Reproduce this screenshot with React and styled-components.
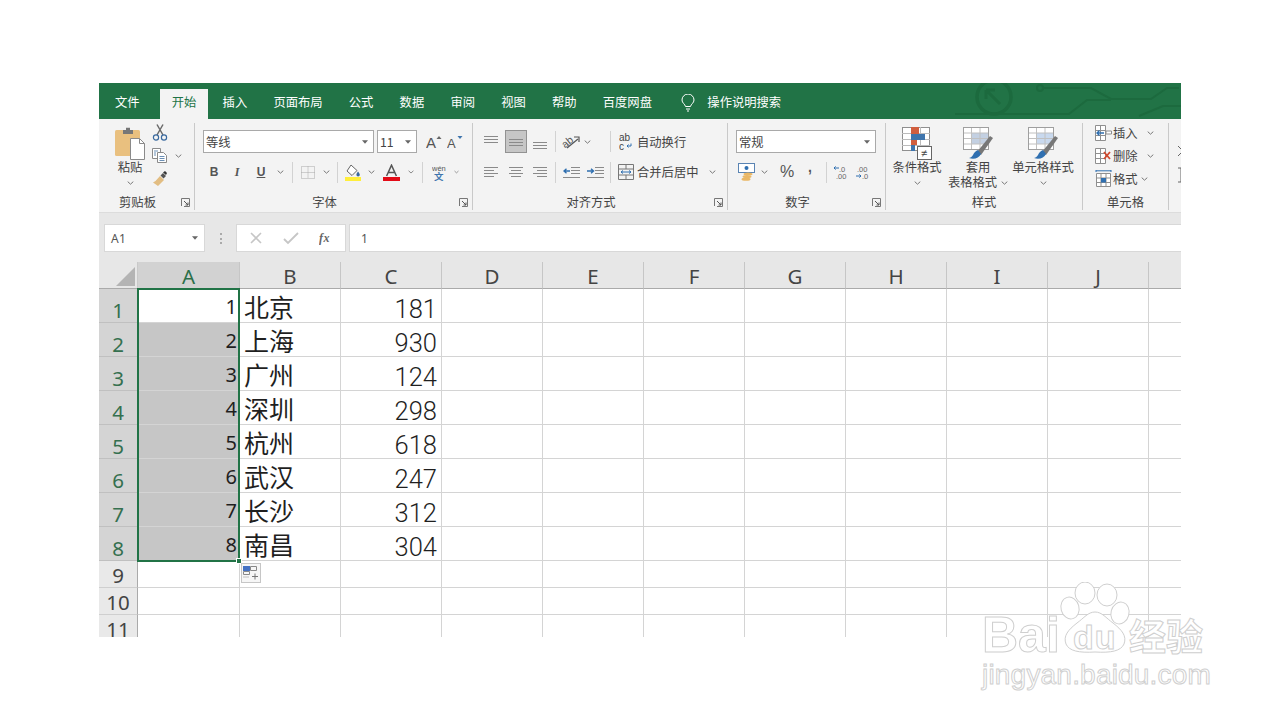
import React from 'react'
import styled, { createGlobalStyle } from 'styled-components'

const GlobalStyle = createGlobalStyle`
  html, body { margin: 0; background: #fff; }
  * { box-sizing: border-box; }
`

const Page = styled.div`
  position: relative;
  width: 1280px;
  height: 720px;
  padding: 83px 99px 0;
  overflow: hidden;
  font-family: "Noto Sans CJK SC", "Noto Sans", sans-serif;
  color: #444;
`
const ExcelWindow = styled.div`
  position: relative;
  width: 1082px;
  height: 554px;
  overflow: hidden;
  background: #e7e7e7;
`
const TabBar = styled.div`
  position: relative;
  display: flex;
  align-items: flex-end;
  height: 36px;
  padding-left: 4px;
  gap: 2.2px;
  background: #217346;
`
const Circuit = styled.svg`
  position: absolute;
  left: 0;
  top: 0;
`
const Tab = styled.div`
  position: relative;
  height: 30px;
  padding: 0 12px;
  line-height: 26px;
  font-size: 12.3px;
  white-space: nowrap;
  color: ${p => (p.$active ? '#217346' : '#fff')};
  background: ${p => (p.$active ? '#f3f3f3' : 'transparent')};
  margin-right: ${p => p.$mr || 0}px;
  margin-left: ${p => p.$ml || 0}px;
`
const TabIcon = styled.svg`
  position: relative;
  margin: 0 0 7px 15px;
`
const Ribbon = styled.div`
  display: flex;
  height: 94px;
  padding-top: 4px;
  background: #f3f3f3;
  border-bottom: 1px solid #dcdcdc;
  overflow: hidden;
`
const Group = styled.section`
  flex: none;
  display: flex;
  flex-direction: column;
  width: ${p => p.$w}px;
  height: 87px;
  border-right: 1px solid #c9c9c9;
`
const GroupBody = styled.div`
  flex: none;
  height: 72px;
  display: ${p => (p.$row ? 'flex' : 'block')};
  padding: ${p => p.$pt ?? 7}px 0 0 ${p => p.$pl || 0}px;
`
const GroupFoot = styled.div`
  display: flex;
  height: 15px;
  align-items: center;
  font-size: 12.3px;
  line-height: 15px;
`
const GroupName = styled.div`
  flex: 1;
  text-align: center;
`
const Launcher = styled.div`
  flex: none;
  width: 18px;
  display: flex;
  justify-content: center;
`
const ToolRow = styled.div`
  display: flex;
  align-items: center;
  height: ${p => p.$h || 23}px;
  margin-bottom: ${p => p.$mb || 0}px;
  margin-left: ${p => p.$ml || 0}px;
  font-size: 12.3px;
  white-space: nowrap;
`
const Slot = styled.div`
  flex: none;
  display: flex;
  align-items: center;
  justify-content: center;
  width: ${p => p.$w}px;
  height: 100%;
`
const ActiveSlot = styled(Slot)`
  width: 22px;
  margin: 0 2px;
  background: #c6c6c6;
  border: 1px solid #929292;
`
const Sep = styled.div`
  flex: none;
  width: 1px;
  height: 21px;
  background: #d2d2d2;
  margin: 0 ${p => p.$r || 0}px 0 ${p => p.$l || 0}px;
`
const Combo = styled.div`
  flex: none;
  display: flex;
  align-items: center;
  justify-content: space-between;
  width: ${p => p.$w}px;
  height: 23px;
  padding: 0 5px 0 2px;
  background: #fff;
  border: 1px solid #a9a9a9;
  margin-right: ${p => p.$mr || 0}px;
  font-size: 12.3px;
`
const Letter = styled.span`
  font-family: ${p => (p.$serif ? '"Liberation Serif"' : '"Liberation Sans"')}, serif;
  font-weight: ${p => (p.$thin ? 400 : 700)};
  font-style: ${p => (p.$italic ? 'italic' : 'normal')};
  font-size: ${p => p.$size || 12}px;
  text-decoration: ${p => (p.$under ? 'underline' : 'none')};
  margin-bottom: ${p => p.$raise || 0}px;
  color: #555;
`
const BigButton = styled.div`
  flex: none;
  display: flex;
  flex-direction: column;
  align-items: center;
  width: ${p => p.$w}px;
  margin-left: ${p => p.$ml || 0}px;
  font-size: 12.3px;
  line-height: 15px;
  white-space: nowrap;
`
const BigIcon = styled.div`
  height: 33px;
  display: flex;
  align-items: flex-start;
`
const BigLine = styled.div`
  height: 15px;
  display: flex;
  align-items: center;
  gap: 4px;
`
const SmallColumn = styled.div`
  margin-top: ${p => p.$mt}px;
`
const WrapLabel = styled.span`
  margin-left: 1px;
`
const FormulaBar = styled.div`
  display: flex;
  height: 49px;
  padding-top: 11px;
  background: #e7e7e7;
`
const FieldBox = styled.div`
  flex: ${p => (p.$w ? 'none' : 1)};
  display: flex;
  align-items: center;
  justify-content: space-between;
  width: ${p => (p.$w ? `${p.$w}px` : 'auto')};
  height: 28px;
  margin-left: ${p => p.$ml || 0}px;
  padding: 0 ${p => p.$px ?? 6}px;
  background: #fff;
  border: 1px solid #d8d8d8;
  border-right-width: ${p => (p.$w ? 1 : 0)}px;
  font-family: "Noto Sans", sans-serif;
  font-size: 12px;
  letter-spacing: 0.4px;
  color: #555;
`
const Dots = styled.div`
  flex: none;
  width: 2px;
  height: 11px;
  margin: 9px 0 0 15px;
  border-left: 2px dotted #aaa;
`
const Sheet = styled.div`
  position: relative;
  background: #fff;
`
const Row = styled.div`
  display: flex;
  height: ${p => p.$h}px;
`
const RowHead = styled.div`
  flex: none;
  width: 39px;
  display: flex;
  align-items: flex-end;
  justify-content: center;
  font-family: "Noto Sans", sans-serif;
  font-size: 20.5px;
  line-height: 23px;
  background: ${p => (p.$on ? '#d4d4d4' : '#e9e9e9')};
  color: ${p => (p.$on ? '#35704f' : '#444')};
  border-right: 1px solid #aaa;
  border-bottom: 1px solid ${p => (p.$on ? '#c0c0c0' : '#cfcfcf')};
`
const Corner = styled.div`
  flex: none;
  width: 39px;
  display: flex;
  padding: 5px 0 0 17px;
  background: #e7e7e7;
  border-bottom: 1px solid #aaa;
  border-right: 1px solid #c9c9c9;
`
const ColHead = styled.div`
  flex: none;
  width: ${p => p.$w}px;
  text-align: center;
  font-family: "Noto Sans", sans-serif;
  font-size: 20.5px;
  line-height: 29px;
  background: ${p => (p.$on ? '#d2d2d2' : '#e7e7e7')};
  color: ${p => (p.$on ? '#2c6f49' : '#444')};
  border-right: 1px solid #c6c6c6;
  border-bottom: 1px solid #aaa;
`
const Cell = styled.div`
  flex: none;
  display: flex;
  align-items: flex-end;
  justify-content: ${p => (p.$left ? 'flex-start' : 'flex-end')};
  width: ${p => p.$w}px;
  padding: 0 ${p => (p.$small ? 2 : 4)}px 0 4px;
  font-family: ${p => (p.$small ? '"Noto Sans"' : 'Roboto')}, sans-serif;
  font-size: ${p => (p.$small ? 20 : 25.5)}px;
  font-weight: ${p => (p.$small ? 400 : 300)};
  line-height: ${p => (p.$small ? 30 : 26)}px;
  color: #1f1f1f;
  background: ${p => (p.$shade ? '#c6c6c6' : '#fff')};
  border-right: 1px solid #d4d4d4;
  border-bottom: 1px solid #d4d4d4;
`
const CjkText = styled.span`
  font-family: "Noto Sans CJK SC", sans-serif;
  font-size: 25px;
  font-weight: 400;
  line-height: 32px;
`
const Selection = styled.div`
  position: absolute;
  left: 38px;
  top: 26px;
  width: 103px;
  height: 274px;
  border: 2px solid #217346;
  pointer-events: none;
`
const FillHandle = styled.div`
  position: absolute;
  right: -4px;
  bottom: -4px;
  width: 6px;
  height: 6px;
  background: #217346;
  border: 1px solid #fff;
`
const PasteOptions = styled.div`
  position: absolute;
  left: 142px;
  top: 301px;
  width: 20px;
  height: 20px;
  display: flex;
  align-items: center;
  justify-content: center;
  background: #f6f6f6;
  border: 1px solid #c6c6c6;
`
const Watermark = styled.div`
  position: absolute;
  left: 982px;
  top: 582px;
  width: 232px;
  height: 112px;
  color: #fff;
  -webkit-text-stroke: 1px #cfcfcf;
  font-family: "Liberation Sans", sans-serif;
`
const Paw = styled.svg`
  position: absolute;
  left: 72px;
  top: 0;
`
const MarkLine = styled.div`
  position: absolute;
  left: 0;
  top: ${p => p.$top}px;
  display: flex;
  align-items: baseline;
  font-size: ${p => p.$size}px;
  line-height: ${p => p.$lh}px;
  font-weight: ${p => p.$weight || 400};
  letter-spacing: ${p => p.$ls || 0}px;
  white-space: nowrap;
`
const MarkDu = styled.span`
  position: absolute;
  left: 91px;
  top: 38px;
  font-size: 34px;
  line-height: 34px;
  letter-spacing: 1px;
  font-weight: 700;
`
const MarkCn = styled.span`
  position: absolute;
  left: 147px;
  top: 33px;
  font-family: "Noto Sans CJK SC", sans-serif;
  font-size: 37px;
  line-height: 40px;
  font-weight: 700;
`

const Chev = () => (
  <svg width="7" height="4" viewBox="0 0 7 4"><path d="M.7.6 3.5 3.2 6.3.6" fill="none" stroke="#777" strokeWidth="1" /></svg>
)
const Caret = () => (
  <svg width="6" height="4" viewBox="0 0 7 4"><path d="M0 0h7L3.5 4z" fill="#666" /></svg>
)
const LaunchIcon = () => (
  <svg width="9" height="9" viewBox="0 0 9 9" fill="none" stroke="#777"><path d="M.5 8V.5H8.5V8.5H3" /><path d="M3 3 7 7M7 4.5V7H4.5" stroke="#555" /></svg>
)

const PasteIcon = () => (
  <svg width="30" height="33" viewBox="0 0 30 33">
    <rect x="0" y="3" width="25" height="26" rx="1.5" fill="#e9c07f" />
    <path d="M8 3h3V.8h4V3h3v4H8z" fill="#777" />
    <path d="M15.500 11.500h9l5 5v16h-14z" fill="#fff" stroke="#8a8a8a" />
    <path d="M24.500 11.500v5h5" fill="none" stroke="#8a8a8a" />
  </svg>
)
const CutIcon = () => (
  <svg width="16" height="17" viewBox="0 0 16 17" fill="none">
    <path d="M5 .5 11 11M11 .5 5 11" stroke="#6a6a6a" strokeWidth="1.5" />
    <circle cx="4" cy="13.500" r="2.600" stroke="#39699f" strokeWidth="1.200" />
    <circle cx="12" cy="13.500" r="2.600" stroke="#39699f" strokeWidth="1.200" />
  </svg>
)
const CopyIcon = () => (
  <svg width="16" height="15" viewBox="0 0 16 15" fill="#fff" stroke="#8a8a8a">
    <path d="M.5.5h8v10h-8z" />
    <path d="M5.500 4.500h6l3 3v7h-9z" />
    <path d="M2 3h4M2 5h2M2 7h2M7.500 8.500h5M7.500 10.500h5M7.500 12.500h5" stroke="#6b8fb5" fill="none" />
  </svg>
)
const BrushIcon = () => (
  <svg width="16" height="16" viewBox="0 0 16 16">
    <path d="M8 5 12 9 6 15 1 11.500 3.500 10z" fill="#e2bd82" />
    <path d="M8.500 4.500 11 2l3 3-2.500 2.500z" fill="#555" />
    <path d="M11 1.500 13 0l2 2-1 2z" fill="#333" />
  </svg>
)
const BordersIcon = () => (
  <svg width="14" height="13" viewBox="0 0 14 13" fill="none" stroke="#a8a8a8" strokeDasharray="1 1">
    <path d="M.5.5h13v12H.5zM7 .5v12M.5 6.500h13" />
  </svg>
)
const FillIcon = () => (
  <svg width="17" height="17" viewBox="0 0 17 17">
    <path d="M6 1 12 6.500 7 11.500 2 7z" fill="#fff" stroke="#666" />
    <path d="M13 7.500c1.200 1.600 1.800 2.400 1.800 3.200a1.700 1.700 0 0 1-3.400 0c0-.8.6-1.600 1.600-3.200z" fill="#39699f" />
    <rect x="0" y="13" width="16" height="4" fill="#ffee3b" />
  </svg>
)
const FontColorIcon = () => (
  <svg width="17" height="17" viewBox="0 0 17 17">
    <path d="M3.600 12 8.500 1.200 13.400 12M5.400 8.500h6.200" fill="none" stroke="#555" strokeWidth="1.500" />
    <rect x="0" y="13" width="17" height="4" fill="#e30b17" />
  </svg>
)
const PhoneticIcon = () => (
  <svg width="14" height="17" viewBox="0 0 14 17">
    <text x="0" y="6.500" fontSize="7.500" fill="#555" fontFamily="Liberation Sans">wén</text>
    <text x="2" y="16" fontSize="9.500" fontWeight="700" fill="#3f75ad" fontFamily="Noto Sans CJK SC">文</text>
  </svg>
)
const GrowFont = ({ down }) => (
  <svg width="17" height="17" viewBox="0 0 17 17">
    <text x="0" y="15" fontSize={down ? 13 : 15} fill="#555" fontFamily="Liberation Sans">A</text>
    <path d={down ? 'M10.500 3h5L13 6z' : 'M10.500 6h5L13 3z'} fill={down ? '#3f75ad' : '#666'} />
  </svg>
)
const AlignIcon = ({ lines, y = 0 }) => (
  <svg width="16" height="14" viewBox="0 0 16 14" fill="none" stroke="#8a8a8a">
    {lines.map((l, i) => (
      <path key={i} d={`M${l[0]} ${y + i * 3 + 1.5}H${l[1]}`} />
    ))}
  </svg>
)
const OrientIcon = () => (
  <svg width="20" height="17" viewBox="0 0 20 17" fill="none">
    <text x="1" y="13" fontSize="10.500" fill="#555" fontFamily="Liberation Sans" transform="rotate(-38 6 10)">ab</text>
    <path d="M6 15 17 6" stroke="#555" strokeWidth="1.200" />
    <path d="M13 4h5v5" stroke="#555" strokeWidth="1.200" />
  </svg>
)
const IndentIcon = ({ right }) => (
  <svg width="17" height="13" viewBox="0 0 17 13" fill="none" stroke="#8a8a8a">
    <path d="M8 1.500h9M8 4.500h9M8 7.500h9M0 11.500h17" />
    {right
      ? <path d="M0 5h6M4 2.800 6.500 5 4 7.200" stroke="#2f6fb0" strokeWidth="1.400" />
      : <path d="M7 5H1M3.500 2.800 1 5l2.500 2.200" stroke="#2f6fb0" strokeWidth="1.400" />}
  </svg>
)
const WrapIcon = () => (
  <svg width="15" height="17" viewBox="0 0 15 17" fill="none">
    <text x="0" y="8" fontSize="10" fill="#444" fontFamily="Liberation Sans">ab</text>
    <text x="0" y="16.500" fontSize="10" fill="#444" fontFamily="Liberation Sans">c</text>
    <path d="M12 10.500v2.500H8M9.500 11.500 8 13l1.500 1.500" stroke="#2f6fb0" />
  </svg>
)
const MergeIcon = () => (
  <svg width="16" height="16" viewBox="0 0 16 16" fill="none" stroke="#777">
    <path d="M.5.5h15v15H.5zM.5 5h15M.5 11h15M8 .5V5M8 11v4.500" />
    <path d="M3 8h10M5 6.500 3 8l2 1.500M11 6.500 13 8l-2 1.500" stroke="#2f6fb0" />
  </svg>
)
const CurrencyIcon = () => (
  <svg width="18" height="18" viewBox="0 0 18 18">
    <rect x=".5" y=".5" width="16" height="9" fill="#fff" stroke="#5a84b3" />
    <circle cx="8.500" cy="5" r="2" fill="#2f6fb0" />
    <ellipse cx="10" cy="11" rx="4.500" ry="1.600" fill="#eab867" />
    <ellipse cx="9" cy="13.600" rx="4.500" ry="1.600" fill="#eab867" />
    <ellipse cx="8" cy="16.200" rx="4.500" ry="1.600" fill="#eab867" />
  </svg>
)
const DecimalIcon = ({ more }) => (
  <svg width="16" height="15" viewBox="0 0 16 15">
    <text x={more ? 6 : 1} y="6.500" fontSize="7.500" fill="#666" fontFamily="Liberation Sans">{more ? '.0' : '.00'}</text>
    <text x={more ? 3 : 6} y="14" fontSize="7.500" fill="#666" fontFamily="Liberation Sans">{more ? '.00' : '.0'}</text>
    {more
      ? <path d="M6 3H1M2.600 1.400 1 3l1.600 1.600" fill="none" stroke="#2f6fb0" />
      : <path d="M0 11h5M3.400 9.400 5 11l-1.600 1.600" fill="none" stroke="#2f6fb0" />}
  </svg>
)
const CondFormatIcon = () => (
  <svg width="30" height="33" viewBox="0 0 30 33">
    <rect x=".5" y=".5" width="27" height="23" fill="#fff" stroke="#8f8f8f" />
    <path d="M9.500 0v24M18.500 0v24M0 6.500h28M0 12.500h28M0 18.500h28" stroke="#bbb" />
    <rect x="9" y="0" width="8" height="7" fill="#d15f3f" />
    <rect x="9" y="7" width="14" height="6" fill="#3f75ad" />
    <rect x="9" y="13" width="6" height="5" fill="#d15f3f" />
    <rect x="9" y="18" width="4" height="6" fill="#3f75ad" />
    <rect x="15.500" y="19.500" width="14" height="13" fill="#fff" stroke="#666" />
    <text x="19" y="30" fontSize="11" fill="#444" fontFamily="Liberation Sans">≠</text>
  </svg>
)
const TableBrush = ({ cells }) => (
  <svg width="30" height="33" viewBox="0 0 30 33">
    <rect x=".5" y=".5" width="25" height="22" fill="#fff" stroke="#9f9f9f" />
    {cells}
    <path d="M8.500 1v21M17 1v21M1 6h24M1 11.500h24M1 17h24" stroke="#c0c0c0" />
    <path d="M14 25 27 9l3 2-12 17z" fill="#777" />
    <path d="M15 23c-3 1-4 3-5 5-1 2-3 3-4 3 5 2 10 0 12-4z" fill="#2f6fb0" />
  </svg>
)
const InsertCellIcon = () => (
  <svg width="17" height="16" viewBox="0 0 17 16" fill="#fff" stroke="#8f8f8f">
    <path d="M.5.5h10v15H.5zM.5 5.500h10M.5 10.500h10M5.500.5v15" />
    <path d="M11 6h5.500v3H11z" />
    <path d="M9 8H2M4.500 5.500 2 8l2.500 2.500" stroke="#2f6fb0" strokeWidth="1.400" fill="none" />
  </svg>
)
const DeleteCellIcon = () => (
  <svg width="17" height="16" viewBox="0 0 17 16" fill="#fff" stroke="#8f8f8f">
    <path d="M.5.5h10v15H.5zM.5 5.500h10M.5 10.500h10M5.500.5v15" />
    <path d="M9 4l6 7M15 4l-6 7" stroke="#d1492e" strokeWidth="1.800" />
  </svg>
)
const FormatCellIcon = () => (
  <svg width="17" height="17" viewBox="0 0 17 17" fill="#fff" stroke="#8f8f8f">
    <path d="M1.500 3.500h14v13h-14zM1.500 8h14M1.500 12.500h14M6 3.500v13M11 3.500v13" />
    <path d="M1 .8h15M1 0v2M16 0v2" stroke="#2f6fb0" />
    <rect x="6" y="8" width="5" height="4.500" fill="#2f6fb0" stroke="none" />
  </svg>
)

const smallLines = [[1, 15], [1, 15], [1, 15]]
const leftLines = [[1, 15], [1, 11], [1, 15], [1, 11]]
const midLines = [[1, 15], [3, 13], [1, 15], [3, 13]]
const rightLines = [[1, 15], [5, 15], [1, 15], [5, 15]]

const columns = [
  ['A', 102], ['B', 101], ['C', 101], ['D', 101], ['E', 101], ['F', 101],
  ['G', 101], ['H', 101], ['I', 101], ['J', 101], ['', 101],
]
const cities = ['北京', '上海', '广州', '深圳', '杭州', '武汉', '长沙', '南昌']
const values = [181, 930, 124, 298, 618, 247, 312, 304]
const tabs = ['插入', '页面布局', '公式', '数据', '审阅', '视图', '帮助', '百度网盘']
const emptyCols = columns.slice(3)

function DataRow({ n }) {
  return (
    <Row $h={34}>
      <RowHead $on>{n}</RowHead>
      <Cell $w={102} $small $shade={n > 1}>{n}</Cell>
      <Cell $w={101} $left><CjkText>{cities[n - 1]}</CjkText></Cell>
      <Cell $w={101}>{values[n - 1]}</Cell>
      {emptyCols.map((c, i) => <Cell key={i} $w={c[1]} />)}
    </Row>
  )
}

function EmptyRow({ n, h }) {
  return (
    <Row $h={h}>
      <RowHead>{n}</RowHead>
      {columns.map((c, i) => <Cell key={i} $w={c[1]} />)}
    </Row>
  )
}

export default function App() {
  return (
    <Page>
      <GlobalStyle />
      <ExcelWindow>
        <TabBar>
          <Circuit width="1082" height="36" fill="none" stroke="#1c6a3e" strokeWidth="2">
            <circle cx="895" cy="14" r="17" strokeWidth="3.500" />
            <path d="M887 7l14 14M887 7v9M887 7h9" strokeWidth="3" />
            <circle cx="941" cy="5" r="3" />
            <path d="M944 5h48l20 11h40l16-11h12" />
            <path d="M856 31h114l18-14h24" />
            <path d="M1040 33l24-10h18" />
          </Circuit>
          <Tab $mr={6}>文件</Tab>
          <Tab $active>开始</Tab>
          {tabs.map(t => <Tab key={t}>{t}</Tab>)}
          <TabIcon width="14" height="18" viewBox="0 0 14 18" fill="none" stroke="#fff">
            <path d="M4.500 12.500C4 10 1 9 1 6a6 6 0 0 1 12 0c0 3-3 4-3.500 6.500z" />
            <path d="M5 15h4M6 17h2" />
          </TabIcon>
          <Tab $ml={-2}>操作说明搜索</Tab>
        </TabBar>

        <Ribbon>
          <Group $w={96}>
            <GroupBody $row $pt={4}>
              <BigButton $w={40} $ml={11}>
                <BigIcon><PasteIcon /></BigIcon>
                <BigLine>粘贴</BigLine>
                <BigLine><Chev /></BigLine>
              </BigButton>
              <SmallColumn $mt={-6}>
                <ToolRow><Slot $w={20}><CutIcon /></Slot></ToolRow>
                <ToolRow><Slot $w={20}><CopyIcon /></Slot><Slot $w={16}><Chev /></Slot></ToolRow>
                <ToolRow><Slot $w={20}><BrushIcon /></Slot></ToolRow>
              </SmallColumn>
            </GroupBody>
            <GroupFoot><GroupName>剪贴板</GroupName><Launcher><LaunchIcon /></Launcher></GroupFoot>
          </Group>

          <Group $w={278}>
            <GroupBody $pl={8}>
              <ToolRow $mb={7}>
                <Combo $w={171} $mr={3}>等线<Caret /></Combo>
                <Combo $w={40} $mr={7}>11<Caret /></Combo>
                <Slot $w={20}><GrowFont /></Slot>
                <Slot $w={22}><GrowFont down /></Slot>
              </ToolRow>
              <ToolRow $h={24}>
                <Slot $w={22}><Letter>B</Letter></Slot>
                <Slot $w={24}><Letter $serif $italic>I</Letter></Slot>
                <Slot $w={24}><Letter $under>U</Letter></Slot>
                <Slot $w={14}><Chev /></Slot>
                <Sep $l={5} />
                <Slot $w={29}><BordersIcon /></Slot>
                <Slot $w={8}><Chev /></Slot>
                <Sep $l={7} $r={1} />
                <Slot $w={29}><FillIcon /></Slot>
                <Slot $w={7}><Chev /></Slot>
                <Slot $w={33}><FontColorIcon /></Slot>
                <Slot $w={6}><Chev /></Slot>
                <Sep $l={8} />
                <Slot $w={31}><PhoneticIcon /></Slot>
                <Slot $w={5}><Chev /></Slot>
              </ToolRow>
            </GroupBody>
            <GroupFoot><GroupName>字体</GroupName><Launcher><LaunchIcon /></Launcher></GroupFoot>
          </Group>

          <Group $w={255}>
            <GroupBody $pl={6}>
              <ToolRow $mb={7}>
                <Slot $w={24}><AlignIcon lines={smallLines} y={0} /></Slot>
                <ActiveSlot $w={22}><AlignIcon lines={smallLines} y={3} /></ActiveSlot>
                <Slot $w={22}><AlignIcon lines={smallLines} y={6} /></Slot>
                <Sep $l={4} $r={4} />
                <Slot $w={22}><OrientIcon /></Slot>
                <Slot $w={10}><Chev /></Slot>
                <Sep $l={18} $r={5} />
                <Slot $w={20}><WrapIcon /></Slot>
                <WrapLabel>自动换行</WrapLabel>
              </ToolRow>
              <ToolRow $h={24}>
                <Slot $w={24}><AlignIcon lines={leftLines} y={1} /></Slot>
                <Slot $w={26}><AlignIcon lines={midLines} y={1} /></Slot>
                <Slot $w={22}><AlignIcon lines={rightLines} y={1} /></Slot>
                <Sep $l={4} $r={4} />
                <Slot $w={22}><IndentIcon /></Slot>
                <Slot $w={26}><IndentIcon right /></Slot>
                <Sep $l={2} $r={5} />
                <Slot $w={20}><MergeIcon /></Slot>
                <WrapLabel>合并后居中</WrapLabel>
                <Slot $w={28}><Chev /></Slot>
              </ToolRow>
            </GroupBody>
            <GroupFoot><GroupName>对齐方式</GroupName><Launcher><LaunchIcon /></Launcher></GroupFoot>
          </Group>

          <Group $w={158}>
            <GroupBody $pl={8}>
              <ToolRow $mb={7}><Combo $w={140}>常规<Caret /></Combo></ToolRow>
              <ToolRow $h={24}>
                <Slot $w={21}><CurrencyIcon /></Slot>
                <Slot $w={15}><Chev /></Slot>
                <Slot $w={30}><Letter $thin $size={16}>%</Letter></Slot>
                <Slot $w={16}><Letter $size={14} $raise={10}>,</Letter></Slot>
                <Sep $l={8} $r={3} />
                <Slot $w={22}><DecimalIcon more /></Slot>
                <Slot $w={24}><DecimalIcon /></Slot>
              </ToolRow>
            </GroupBody>
            <GroupFoot><GroupName>数字</GroupName><Launcher><LaunchIcon /></Launcher></GroupFoot>
          </Group>

          <Group $w={197}>
            <GroupBody $row $pt={4}>
              <BigButton $w={62}>
                <BigIcon><CondFormatIcon /></BigIcon>
                <BigLine>条件格式</BigLine>
                <BigLine><Chev /></BigLine>
              </BigButton>
              <BigButton $w={60}>
                <BigIcon>
                  <TableBrush cells={<rect x="9" y="6" width="16" height="11" fill="#c3d0e2" />} />
                </BigIcon>
                <BigLine>套用</BigLine>
                <BigLine>表格格式<Chev /></BigLine>
              </BigButton>
              <BigButton $w={70}>
                <BigIcon>
                  <TableBrush cells={<rect x="8" y="6" width="17" height="11" fill="#c9d9ee" />} />
                </BigIcon>
                <BigLine>单元格样式</BigLine>
                <BigLine><Chev /></BigLine>
              </BigButton>
            </GroupBody>
            <GroupFoot><GroupName>样式</GroupName></GroupFoot>
          </Group>

          <Group $w={86}>
            <GroupBody $pt={0}>
              <SmallColumn $mt={-2}>
                <ToolRow $ml={10}><Slot $w={20}><InsertCellIcon /></Slot>插入<Slot $w={26}><Chev /></Slot></ToolRow>
                <ToolRow $ml={10}><Slot $w={20}><DeleteCellIcon /></Slot>删除<Slot $w={26}><Chev /></Slot></ToolRow>
                <ToolRow $ml={10}><Slot $w={20}><FormatCellIcon /></Slot>格式<Slot $w={14}><Chev /></Slot></ToolRow>
              </SmallColumn>
            </GroupBody>
            <GroupFoot><GroupName>单元格</GroupName></GroupFoot>
          </Group>

          <Slot $w={12}>
            <svg width="12" height="48" viewBox="0 0 12 48" fill="none" stroke="#666">
              <path d="M9 2l3 3M12 9l-3 3M9 24h3v14H9" />
            </svg>
          </Slot>
        </Ribbon>

        <FormulaBar>
          <FieldBox $w={101} $ml={5}>A1<Caret /></FieldBox>
          <Dots />
          <FieldBox $w={110} $ml={14} $px={12}>
            <svg width="14" height="14" viewBox="0 0 14 14" fill="none" stroke="#c6c6c6" strokeWidth="1.600"><path d="M2 2l10 10M12 2 2 12" /></svg>
            <svg width="16" height="14" viewBox="0 0 16 14" fill="none" stroke="#c6c6c6" strokeWidth="1.800"><path d="M1 8l4 4L15 2" /></svg>
            <svg width="14" height="14" viewBox="0 0 14 14"><text x="0" y="11" fontSize="12" fontStyle="italic" fontWeight="700" fontFamily="Liberation Serif" fill="#666">fx</text></svg>
          </FieldBox>
          <FieldBox $ml={3} $px={11}>1</FieldBox>
        </FormulaBar>

        <Sheet>
          <Row $h={27}>
            <Corner>
              <svg width="19" height="19" viewBox="0 0 19 19"><path d="M19 0v19H0z" fill="#b4b4b4" /></svg>
            </Corner>
            {columns.map((c, i) => <ColHead key={i} $w={c[1]} $on={c[0] === 'A'}>{c[0]}</ColHead>)}
          </Row>
          {cities.map((_, i) => <DataRow key={i} n={i + 1} />)}
          <EmptyRow n={9} h={27} />
          <EmptyRow n={10} h={27} />
          <EmptyRow n={11} h={27} />
          <Selection><FillHandle /></Selection>
          <PasteOptions>
            <svg width="16" height="14" viewBox="0 0 16 14" fill="none">
              <rect x="0" y="0" width="7" height="5" fill="#4472c4" />
              <path d="M7.500.5h6v4h-6zM.5 5.500h6v3h-6z" stroke="#888" />
              <path d="M.5 11h6" stroke="#888" strokeDasharray="1 1" />
              <path d="M9 10.500h6M12 7.500v6" stroke="#777" />
            </svg>
          </PasteOptions>
        </Sheet>
      </ExcelWindow>

      <Watermark>
        <Paw width="80" height="72" viewBox="0 0 80 72" fill="#fff" stroke="#cfcfcf" strokeWidth="1">
          <ellipse cx="31" cy="11" rx="10" ry="11" />
          <ellipse cx="53" cy="13" rx="10" ry="11" />
          <ellipse cx="16" cy="26" rx="9" ry="11" transform="rotate(-15 16 26)" />
          <ellipse cx="66" cy="31" rx="9" ry="11" transform="rotate(15 66 31)" />
          <path d="M41 30c7 0 11 6 18 11 9 7 14 13 11 21-3 7-13 9-29 8-16 1-26-1-29-8-3-8 2-14 11-21 7-5 11-11 18-11z" />
        </Paw>
        <MarkLine $top={25} $size={50} $lh={56} $weight={700}>Bai</MarkLine>
        <MarkDu>du</MarkDu>
        <MarkCn>经验</MarkCn>
        <MarkLine $top={76} $size={28} $lh={34} $ls={0.2}>jingyan.baidu.com</MarkLine>
      </Watermark>
    </Page>
  )
}
